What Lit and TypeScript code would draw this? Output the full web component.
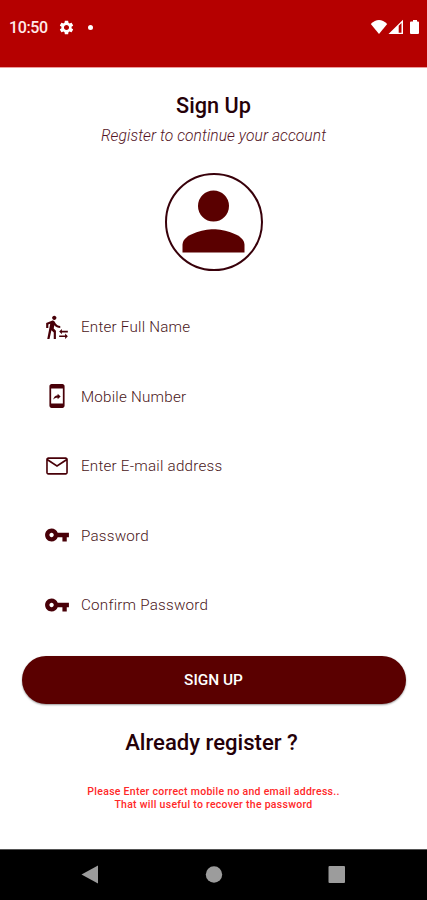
import { LitElement, html, css, svg } from "lit";
import { customElement, property } from "lit/decorators.js";

const icons: Record<string, unknown> = {
  person: svg`<path d="M16.49 15.5v-1.75L14 16.25l2.49 2.5V17H22v-1.5zM19.51 19.75H14v1.5h5.51V23L22 20.5 19.51 18zM9.5 5.5c1.1 0 2-.9 2-2s-.9-2-2-2-2 .9-2 2 .9 2 2 2zM5.75 8.9L3 23h2.1l1.75-8L9 17v6h2v-7.55L8.95 13.4l.6-3C10.85 12 12.8 13 15 13v-2c-1.85 0-3.45-1-4.35-2.45L9.7 6.95C9.35 6.35 8.7 6 8 6c-.25 0-.5.05-.75.15L2 8.3V13h2V9.65l1.75-.75"/>`,
  mobile: svg`<path d="M17 1H7c-1.1 0-2 .9-2 2v18c0 1.1.9 2 2 2h10c1.1 0 2-.9 2-2V3c0-1.1-.9-2-2-2zm.4 18H6.600V5h10.800v14z"/><path d="M12.8 13.22v1.75l3.2-2.99L12.8 9v1.7c-3.11.43-4.35 2.56-4.8 4.7 1.11-1.5 2.58-2.18 4.8-2.18z" transform="translate(1.6 2.2) scale(.86)"/>`,
  mail: svg`<path fill-rule="evenodd" d="M22 6c0-1.1-.9-2-2-2H4c-1.1 0-2 .9-2 2v12c0 1.1.9 2 2 2h16c1.1 0 2-.9 2-2V6zM20.300 5.500L12 11 3.700 5.500zM20.500 18.500H3.500V7.300L12 13l8.500-5.700z"/>`,
  key: svg`<path d="M12.65 10C11.83 7.67 9.61 6 7 6c-3.31 0-6 2.69-6 6s2.69 6 6 6c2.61 0 4.83-1.67 5.65-4H17v4h4v-4h2v-4H12.65zM7 14c-1.1 0-2-.9-2-2s.9-2 2-2 2 .9 2 2-.9 2-2 2z"/>`,
};

@customElement("form-field")
class FormField extends LitElement {
  @property() icon = "";
  @property() label = "";
  static styles = css`
    :host { display: flex; align-items: center; height: 69.5px; padding-left: 44px; color: #4a1620; }
    svg { width: 26px; height: 26px; fill: #480008; margin-right: 11px; flex: none; }
    span { font-size: 15.2px; font-weight: 300; white-space: nowrap; letter-spacing: 0.22px; padding-top: 1px; }
  `;
  render() {
    return html`<svg viewBox="0 0 24 24">${icons[this.icon]}</svg><span>${this.label}</span>`;
  }
}

@customElement("app-root")
class AppRoot extends LitElement {
  static styles = css`
    :host { display: flex; flex-direction: column; height: 900px; width: 427px; background: #fff;
      font-family: Roboto, "Liberation Sans", sans-serif; overflow: hidden; }
    .status { height: 68px; box-sizing: border-box; background: #b50000; border-bottom: 1px solid #ec9c9c;
      display: flex; align-items: flex-start; padding: 18px 7px 0 9px; color: #ffeaea; flex: none; }
    .time { font-size: 16px; line-height: 20px; font-weight: 500; letter-spacing: -0.4px; width: 49px; }
    .gear { width: 17px; height: 17px; fill: #fff; margin-top: .5px; }
    .dot { width: 5px; height: 5px; border-radius: 50%; background: #fff; margin: 7px 0 0 13px; }
    .signals { margin: 1px 0 0 auto; width: 50px; height: 16px; fill: #fff; }
    main { flex: 1; display: flex; flex-direction: column; align-items: center; }
    h1, h2, p { margin: 0; white-space: nowrap; text-align: center; }
    h1 { margin-top: 25px; font-size: 21.7px; line-height: 26px; font-weight: 500; color: #250008; }
    .sub { margin-top: 7px; font-size: 15.6px; line-height: 20px; font-weight: 300; font-style: italic;
      letter-spacing: .07px; color: #541424; }
    .avatar { margin-top: 26.5px; width: 98px; height: 98px; box-sizing: border-box; border: 2px solid #38000a;
      border-radius: 50%; display: flex; align-items: center; justify-content: center; flex: none; }
    .avatar svg { width: 93px; height: 93px; fill: #5a0000; flex: none; }
    .fields { align-self: stretch; margin-top: 21.5px; }
    .button { border: 0; margin-top: 16px; width: 384px; height: 48px; border-radius: 24px; background: #5a0000; color: #fff;
      font: 500 15.4px Roboto, sans-serif; box-shadow: 0 1px 2px rgba(0,0,0,.4); flex: none; padding: 1px 0 0; }
    h2 { margin-top: 25px; font-size: 22.1px; line-height: 26px; font-weight: 500; color: #250008; padding-right: 4px; }
    .note { margin-top: 30px; font-size: 10.5px; line-height: 13px; font-weight: 500; color: #ff2828; letter-spacing: .28px; }
    nav { height: 51px; box-sizing: border-box; background: #000; border-top: 1px solid #555; flex: none; }
    nav svg { display: block; width: 427px; height: 50px; fill: #9c9c9c; }
  `;
  render() {
    return html`
      <div class="status">
        <span class="time">10:50</span>
        <svg class="gear" viewBox="0 0 24 24"><path d="M19.14 12.94c.04-.3.06-.61.06-.94 0-.32-.02-.64-.07-.94l2.03-1.58c.18-.14.23-.41.12-.61l-1.92-3.32c-.12-.22-.37-.29-.59-.22l-2.39.96c-.5-.38-1.03-.7-1.62-.94l-.36-2.54c-.04-.24-.24-.41-.48-.41h-3.84c-.24 0-.43.17-.47.41l-.36 2.54c-.59.24-1.13.57-1.62.94l-2.39-.96c-.22-.08-.47 0-.59.22L2.74 8.87c-.12.21-.08.47.12.61l2.03 1.58c-.05.3-.09.63-.09.94s.02.64.07.94l-2.03 1.58c-.18.14-.23.41-.12.61l1.92 3.32c.12.22.37.29.59.22l2.39-.96c.5.38 1.03.7 1.62.94l.36 2.54c.05.24.24.41.48.41h3.84c.24 0 .44-.17.47-.41l.36-2.54c.59-.24 1.13-.56 1.62-.94l2.39.96c.22.08.47 0 .59-.22l1.92-3.32c.12-.22.07-.47-.12-.61l-2.01-1.58zM12 15.6c-1.98 0-3.6-1.62-3.6-3.6s1.62-3.6 3.6-3.6 3.6 1.62 3.6 3.6-1.62 3.6-3.6 3.6z"/></svg>
        <i class="dot"></i>
        <svg class="signals" viewBox="0 0 50 16">
          <path d="M.8 5Q9-3 17.2 5L9 15Z"/>
          <path fill-rule="evenodd" d="M18.5 15L33 .8V15ZM28.7 6.7V13.7H31.5V4Z"/>
          <path d="M43 1h4v1.4h1q1 0 1 1V14q0 1-1 1h-7q-1 0-1-1V3.4q0-1 1-1h2z"/>
        </svg>
      </div>
      <main>
        <h1>Sign Up</h1>
        <p class="sub">Register to continue your account</p>
        <div class="avatar"><svg viewBox="0 0 24 24"><circle cx="12" cy="8" r="4"/><path d="M12 14c-2.67 0-8 1.34-8 4v2h16v-2c0-2.66-5.33-4-8-4z"/></svg></div>
        <div class="fields">
          <form-field icon="person" label="Enter Full Name"></form-field>
          <form-field icon="mobile" label="Mobile Number"></form-field>
          <form-field icon="mail" label="Enter E-mail address"></form-field>
          <form-field icon="key" label="Password"></form-field>
          <form-field icon="key" label="Confirm Password"></form-field>
        </div>
        <button class="button">SIGN UP</button>
        <h2>Already register ?</h2>
        <p class="note">Please Enter correct mobile no and email address..<br />That will useful to recover the password</p>
      </main>
      <nav><svg viewBox="0 0 427 50">
        <path d="M81.5 24.5L98 15.5V33.5Z"/><circle cx="214" cy="24.5" r="8.2"/><rect x="328.500" y="16" width="16.5" height="17" rx="1"/>
      </svg></nav>`;
  }
}
